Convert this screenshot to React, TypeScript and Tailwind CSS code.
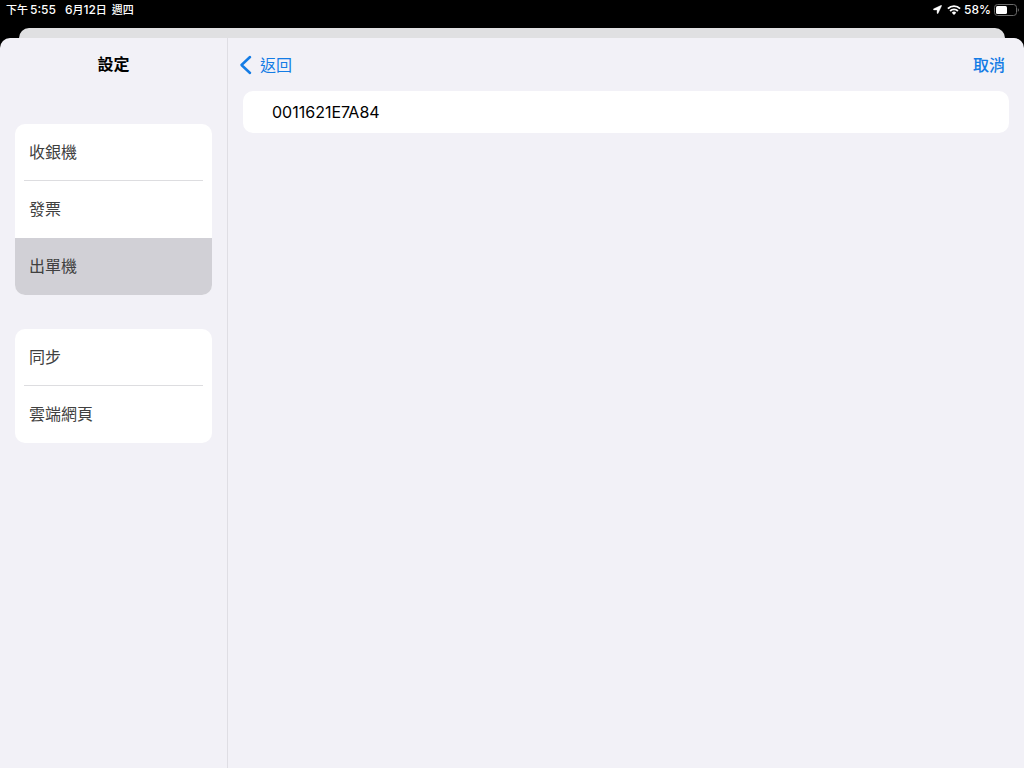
import React, { useState } from "react";

const groups: string[][] = [
  ["收銀機", "發票", "出單機"],
  ["同步", "雲端網頁"],
];

function LocationIcon() {
  return (
    <svg width="9" height="9" viewBox="0 0 10 10" fill="currentColor" aria-hidden="true">
      <path d="M9.1.4.8 4.2c-.7.3-.5 1.3.2 1.3h3.3c.1 0 .2.1.2.2V9c0 .7.9.9 1.2.2L9.6.9c.2-.4-.1-.7-.5-.5Z" stroke="currentColor" strokeWidth=".4" />
    </svg>
  );
}

function WifiIcon() {
  return (
    <svg width="14" height="10" viewBox="0 0 14 10" fill="none" stroke="currentColor" aria-hidden="true">
      <path d="M.9 3.6a8.7 8.7 0 0 1 12.2 0" strokeWidth="1.9" />
      <path d="M3.1 6a5.6 5.6 0 0 1 7.8 0" strokeWidth="1.9" />
      <path d="M7 10 4.8 7.7a3.1 3.1 0 0 1 4.4 0Z" fill="currentColor" stroke="none" />
    </svg>
  );
}

function BatteryIcon() {
  return (
    <svg width="25" height="12" viewBox="0 0 25 12" fill="none" aria-hidden="true">
      <rect x=".5" y=".5" width="22" height="11" rx="3" stroke="#6a6a6a" />
      <rect x="2" y="2" width="11" height="8" rx="1.5" fill="#fff" />
      <path d="M23.8 4.2v3.6c.7-.3 1.1-1 1.1-1.8s-.4-1.5-1.1-1.8Z" fill="#6a6a6a" />
    </svg>
  );
}

function StatusBar() {
  return (
    <header className="flex h-7 items-start justify-between pl-1.5 pr-[5px] text-white">
      <div className="flex h-5 items-center gap-[9px] text-[12px] leading-5 font-medium">
        <span className="flex items-center gap-0.5">
          <span className="text-[11px]">下午</span>
          <span>5:55</span>
        </span>
        <span className="flex items-center gap-[5px]">
          <span>6<span className="text-[11px]">月</span>12<span className="text-[11px]">日</span></span>
          <span className="text-[11px]">週四</span>
        </span>
      </div>
      <div className="flex h-[19px] items-center gap-[5px]">
        <LocationIcon />
        <div className="flex items-center gap-[3px]">
          <WifiIcon />
          <span className="text-[12px] leading-5 font-medium">58%</span>
          <BatteryIcon />
        </div>
      </div>
    </header>
  );
}

export default function App() {
  const [selected, setSelected] = useState("出單機");

  return (
    <div className="flex min-h-screen flex-col bg-black font-['Inter','Noto_Sans_CJK_TC',sans-serif] text-black">
      <StatusBar />
      <div className="mx-[19px] h-2.5 rounded-t-[10px] bg-[#e0e0e2]" />
      <div className="flex flex-1 rounded-t-[10px] bg-[#f2f1f7]">
        <aside className="w-[228px] shrink-0 border-r border-[#dfdee4]">
          <h1 className="flex h-[52px] items-center justify-center text-[16px] leading-6 font-bold">設定</h1>
          <nav aria-label="設定" className="mt-[34px] flex flex-col gap-[34px] px-[15px]">
            {groups.map((items) => (
              <ul key={items[0]} className="overflow-hidden rounded-[10px] bg-white">
                {items.map((item, i) => {
                  const active = item === selected;
                  const divided = !active && i < items.length - 1 && items[i + 1] !== selected;
                  return (
                    <li key={item} className={active ? "bg-[#d1d0d6]" : ""}>
                      <button
                        type="button"
                        aria-current={active ? "page" : undefined}
                        onClick={() => setSelected(item)}
                        className="flex h-14 w-full items-center px-3.5 text-left text-[16px] leading-6 text-[#404040]"
                      >
                        {item}
                      </button>
                      <div className={divided ? "mx-[9px] h-px bg-[#dddde0]" : "h-px"} />
                    </li>
                  );
                })}
              </ul>
            ))}
          </nav>
        </aside>
        <main className="min-w-0 flex-1 px-[15px]">
          <div className="flex h-[53px] items-center justify-between pr-1 text-[16px] leading-6 text-[#147ce5]">
            <button type="button" className="-ml-1 flex items-center gap-2">
              <svg width="13" height="20" viewBox="0 0 13 20" fill="none" stroke="currentColor" strokeWidth="2.5" strokeLinecap="round" strokeLinejoin="round" aria-hidden="true">
                <path d="M11 2 2.5 10l8.5 8" />
              </svg>
              返回
            </button>
            <button type="button" className="font-medium">取消</button>
          </div>
          <button type="button" className="flex h-[42px] w-full items-center rounded-[10px] bg-white px-[29px] text-left text-[16px] leading-6">
            0011621E7A84
          </button>
        </main>
      </div>
    </div>
  );
}
